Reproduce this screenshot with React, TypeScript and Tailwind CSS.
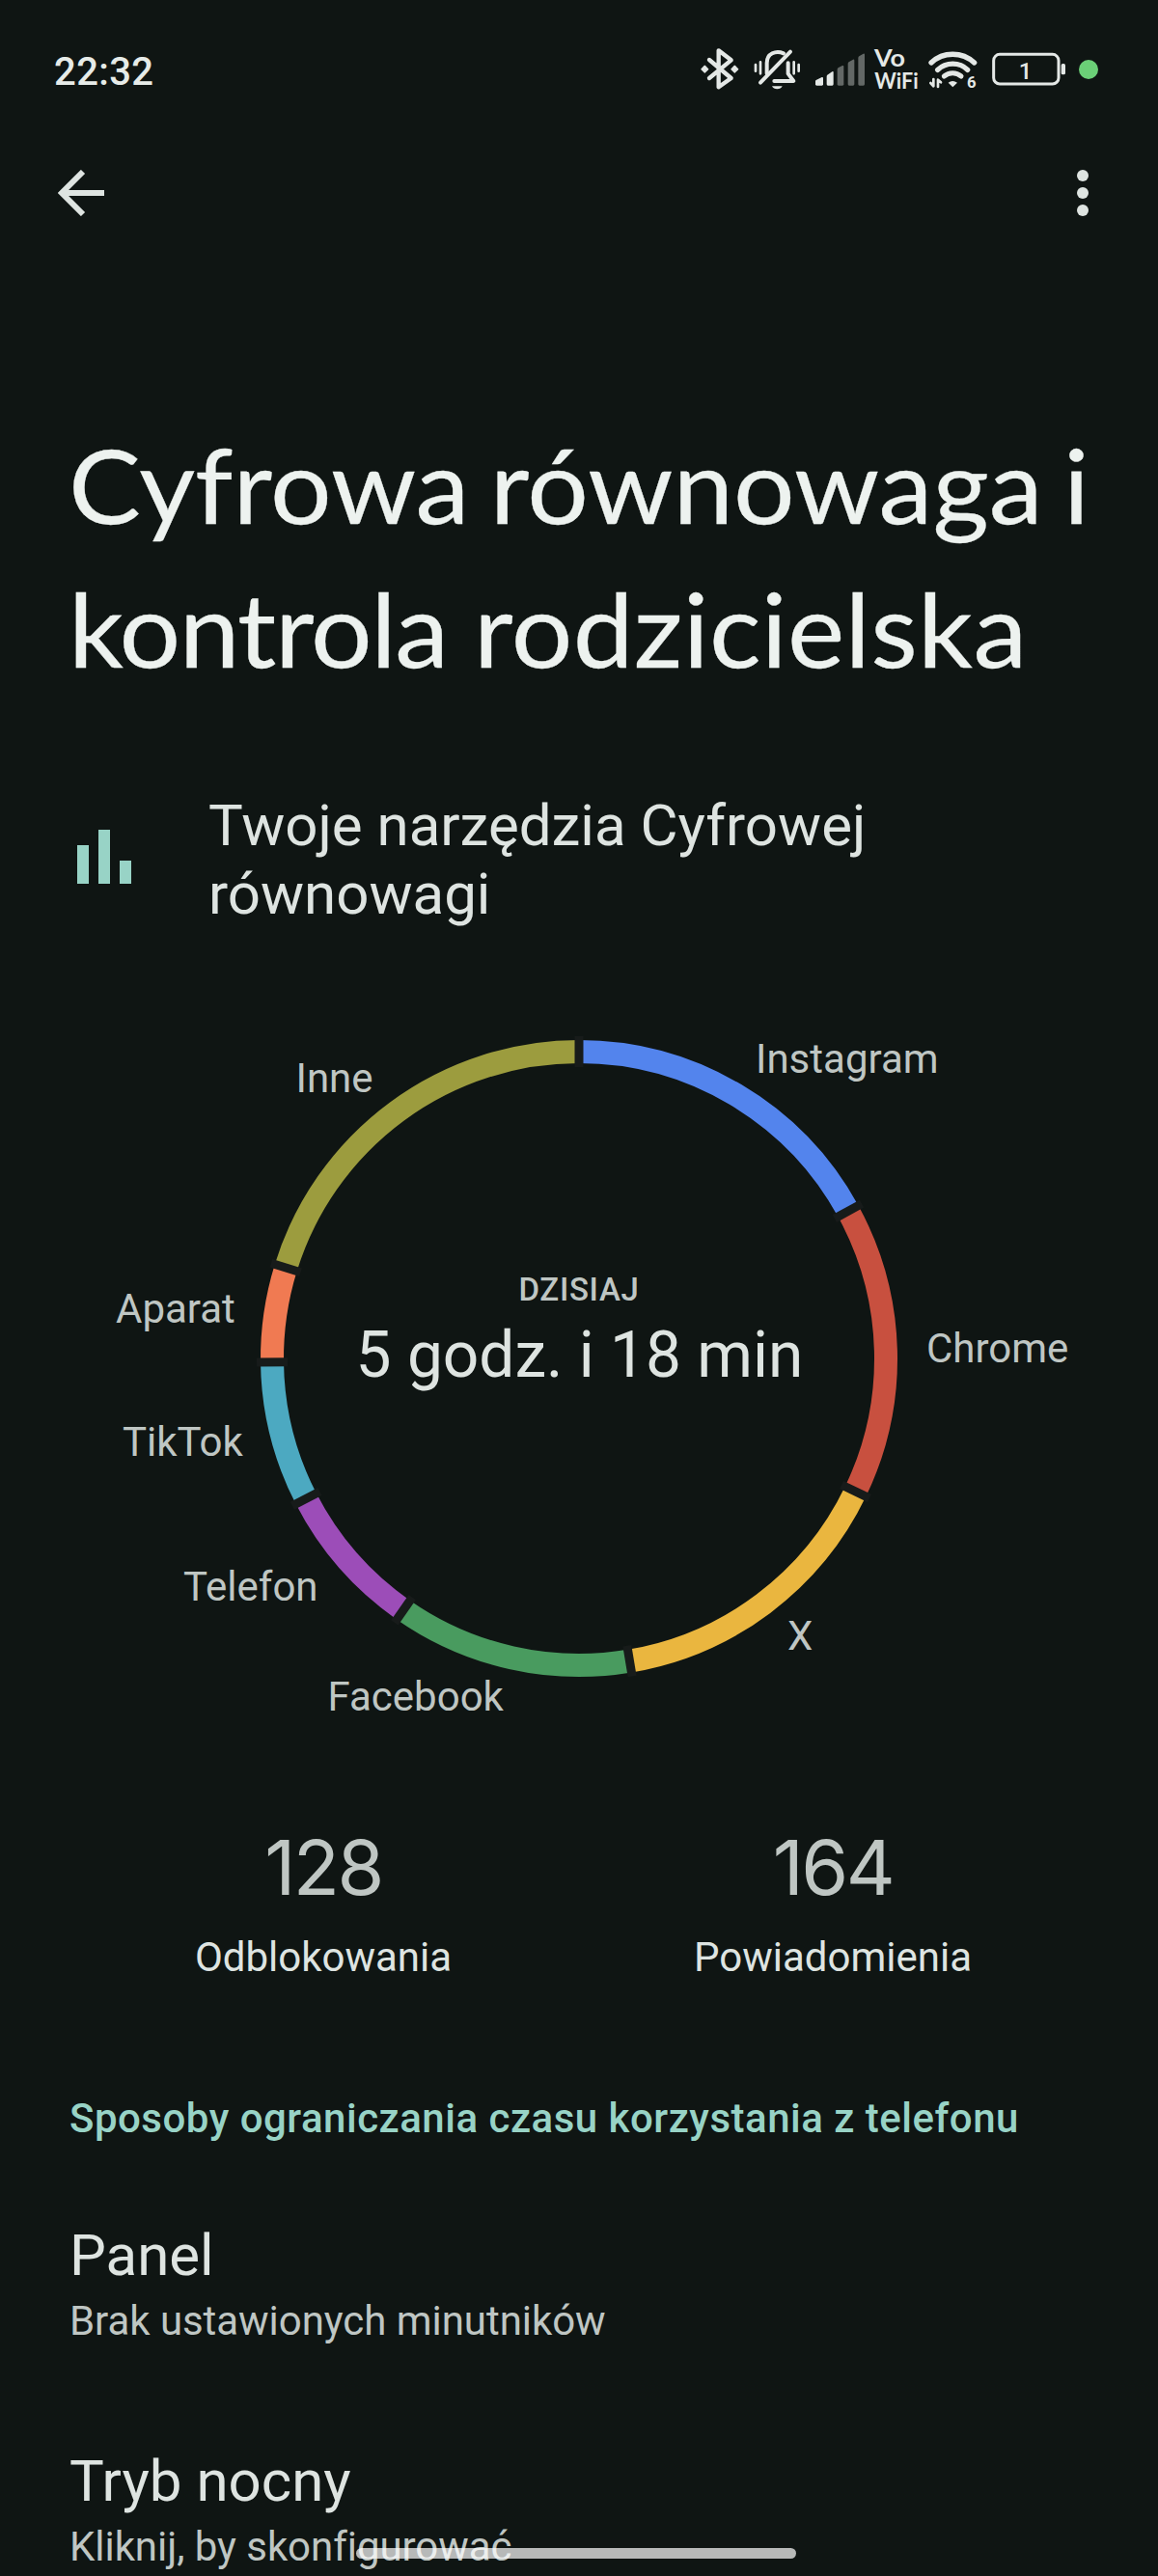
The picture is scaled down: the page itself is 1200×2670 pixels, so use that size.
import React from 'react';

interface Segment {
  name: string;
  from: number;
  to: number;
  color: string;
  x: number;
  y: number;
}

const CX = 600;
const CY = 368;
const R = 318;

// Angles are in degrees, clockwise from 12 o'clock
const segments: Segment[] = [
  { name: 'Instagram', from: 0, to: 61.3, color: '#5384ed', x: 783, y: 72 },
  { name: 'Chrome', from: 61.3, to: 115.7, color: '#c8503f', x: 960, y: 372 },
  { name: 'X', from: 115.7, to: 170.5, color: '#eab63f', x: 816, y: 670 },
  { name: 'Facebook', from: 170.5, to: 214.9, color: '#499b5f', x: 339.5, y: 733 },
  { name: 'Telefon', from: 214.9, to: 242.8, color: '#9c4db8', x: 190, y: 619 },
  { name: 'TikTok', from: 242.8, to: 269.3, color: '#4ca9c1', x: 127, y: 469 },
  { name: 'Aparat', from: 269.3, to: 287.2, color: '#f07a52', x: 120, y: 331 },
  { name: 'Inne', from: 287.2, to: 360, color: '#9c9c3e', x: 306.5, y: 92 },
];

const point = (angle: number, radius: number) => {
  const rad = (angle * Math.PI) / 180;
  return [CX + radius * Math.sin(rad), CY - radius * Math.cos(rad)];
};

const arc = (from: number, to: number) => {
  const [x1, y1] = point(from, R);
  const [x2, y2] = point(to, R);
  return `M${x1} ${y1}A${R} ${R} 0 0 1 ${x2} ${y2}`;
};

const StatusBar: React.FC = () => (
  <div className="flex h-36 items-center justify-between pl-14 pr-[62px] text-[#e6ebe8]">
    <span className="pt-1.5 text-[40px] leading-none font-medium tracking-[0.4px]">22:32</span>
    <svg width="412" height="72" viewBox="78 18 1236 216" fill="none" stroke="#e4e8e6" strokeLinecap="round" strokeLinejoin="round">
      {/* Bluetooth */}
      <path d="M105 96L173 153L134 181V67L173 97L105 153" strokeWidth="13" />
      <path d="M91 115L101 125L91 135L81 125ZM184 115L194 125L184 135L174 125Z" fill="#e4e8e6" strokeWidth="4" />
      {/* Muted bell */}
      <path d="M264 167L357 71" strokeWidth="12" />
      <path d="M284 139V106C284 76 312 66 336 76M350 106V139L367 162H307" strokeWidth="12" />
      <path d="M300 178H332C328 190 304 190 300 178Z" fill="#e4e8e6" stroke="none" />
      <path d="M249 111V131M264 103V139M368 103V139M383 111V131" strokeWidth="8" />
      {/* Signal */}
      <g stroke="none">
        <path d="M435 162Q435 160 437 159L455 150Q459 149 459 153V172Q459 176 455 176H439Q435 176 435 172Z" fill="#e4e8e6" />
        <path d="M470 148Q470 144 474 142L487 133Q491 131 491 135V172Q491 176 487 176H474Q470 176 470 172Z" fill="#e4e8e6" />
        <path d="M503 126Q503 122 507 120L519 114Q523 113 523 117V172Q523 176 519 176H507Q503 176 503 172Z" fill="#636866" />
        <path d="M536 108Q536 104 540 102L552 95Q556 94 556 98V172Q556 176 552 176H540Q536 176 536 172Z" fill="#636866" />
        <path d="M568 90Q568 86 572 84L584 77Q588 76 588 80V172Q588 176 584 176H572Q568 176 568 172Z" fill="#636866" />
      </g>
      <g fill="#e4e8e6" stroke="none" fontFamily="Lato, sans-serif" fontWeight="700">
        <text x="618" y="116" fontSize="72" textLength="96" lengthAdjust="spacingAndGlyphs">Vo</text>
        <text x="619" y="187" fontSize="70" textLength="136" lengthAdjust="spacingAndGlyphs">WiFi</text>
      </g>
      {/* Wi-Fi 6 */}
      <path d="M795 105C832 70 891 70 929 105M815 127C841 102 883 102 908 127" strokeWidth="16" />
      <path d="M835 147C850 134 873 134 888 147" strokeWidth="15" />
      <path d="M848 167Q861 157 876 167L862 181Z" fill="#e4e8e6" stroke="none" />
      <path d="M793 168L802 178V156M816 180V158L825 166" strokeWidth="8" />
      <text x="906" y="183" fill="#e4e8e6" stroke="none" fontSize="50" fontWeight="700" fontFamily="Roboto, sans-serif">6</text>
      {/* Battery */}
      <rect x="989" y="79" width="202" height="92" rx="19" strokeWidth="9" />
      <rect x="1199" y="108" width="13" height="34" rx="5" fill="#e4e8e6" stroke="none" />
      <text x="1088" y="156" fill="#e4e8e6" stroke="none" fontSize="72" fontWeight="500" textAnchor="middle" fontFamily="Roboto, sans-serif">1</text>
      <circle cx="1284" cy="126" r="30" fill="#6bd077" stroke="none" />
    </svg>
  </div>
);

const AppBar: React.FC = () => (
  <div className="flex h-28 items-center justify-between pl-[60px] pr-[72px]">
    <svg width="48" height="48" viewBox="0 0 48 48" fill="none" stroke="#dee4e1" strokeWidth="6">
      <path d="M26 2L4 24L26 46M3 24H48" />
    </svg>
    <div className="flex flex-col gap-1.5">
      <div className="size-3 rounded-full bg-[#dee4e1]"></div>
      <div className="size-3 rounded-full bg-[#dee4e1]"></div>
      <div className="size-3 rounded-full bg-[#dee4e1]"></div>
    </div>
  </div>
);

const UsageChart: React.FC = () => (
  <svg className="mt-[78px] block" width="1200" height="760" viewBox="0 0 1200 760" fontFamily="Roboto, sans-serif">
    {segments.map((s) => (
      <path key={s.name} d={arc(s.from, s.to)} fill="none" stroke={s.color} strokeWidth="24" />
    ))}
    {segments.map((s) => {
      const [x1, y1] = point(s.from, 302);
      const [x2, y2] = point(s.from, 334);
      return <line key={s.name} x1={x1} y1={y1} x2={x2} y2={y2} stroke="#171b1a" strokeWidth="9" />;
    })}
    {segments.map((s) => (
      <text key={s.name} x={s.x} y={s.y} fontSize="42" fill="#bfc6c3">
        {s.name}
      </text>
    ))}
    <text x="600" y="308" fontSize="33" fontWeight="500" letterSpacing="0.7" fill="#bfc6c3" textAnchor="middle">DZISIAJ</text>
    <text x="600.5" y="387" fontSize="65.8" fill="#dee4e1" textAnchor="middle">5 godz. i 18 min</text>
  </svg>
);

const Stat: React.FC<{ value: string; label: string }> = ({ value, label }) => (
  <div className="flex w-[528px] flex-col items-center">
    <span className="font-[Inter] text-[79px] leading-[96px] tracking-[-2.6px] text-[#bfc6c3]">{value}</span>
    <span className="mt-[21px] text-[42px] leading-[50px]">{label}</span>
  </div>
);

const Item: React.FC<{ title: string; summary: string }> = ({ title, summary }) => (
  <div>
    <h3 className="text-[60px] leading-[70px]">{title}</h3>
    <p className="mt-2 text-[42px] leading-[50px] tracking-[-0.05px] text-[#bfc6c3]">{summary}</p>
  </div>
);

const App: React.FC = () => {
  return (
    <div className="relative h-[2670px] w-[1200px] overflow-hidden bg-[#0f1513] font-[Roboto] text-[#dee4e1]">
      <StatusBar />
      <AppBar />

      <h1 className="mt-[171px] ml-[71px] w-[1060px] origin-left scale-x-105 font-[Lato] text-[107px] leading-[149px] whitespace-nowrap text-[#edf2ef] [-webkit-text-stroke:0.3px_#edf2ef]">
        <span className="block [word-spacing:-7px]">Cyfrowa równowaga i</span>
        <span className="block">
          <span className="tracking-[-1.4px]">kontrola </span>
          <span className="tracking-[0.2px]">rodzicielska</span>
        </span>
      </h1>

      <div className="mt-[95px] flex items-center pl-20">
        <div className="mb-1.5 flex h-14 items-end gap-2.5">
          <div className="h-10 w-3 bg-[#98d3c6]"></div>
          <div className="h-14 w-3 bg-[#98d3c6]"></div>
          <div className="h-6 w-3 bg-[#98d3c6]"></div>
        </div>
        <h2 className="ml-20 text-[60px] leading-[71px]">
          Twoje narzędzia Cyfrowej
          <br />
          równowagi
        </h2>
      </div>

      <UsageChart />

      <div className="mt-[87px] flex pl-[71px]">
        <Stat value="128" label="Odblokowania" />
        <Stat value="164" label="Powiadomienia" />
      </div>

      <div className="mt-[117px] pl-[72px]">
        <h2 className="text-[42px] leading-[50px] font-medium tracking-[0.5px] text-[#98d3c6]">
          Sposoby ograniczania czasu korzystania z telefonu
        </h2>
        <div className="mt-[82px] flex flex-col gap-[106px]">
          <Item title="Panel" summary="Brak ustawionych minutników" />
          <Item title="Tryb nocny" summary="Kliknij, by skonfigurować" />
        </div>
      </div>

      {/* Gesture bar over the list */}
      <div className="absolute bottom-[18px] left-[369px] h-[11px] w-[456px] rounded-full bg-white/70"></div>
    </div>
  );
};

export default App;
